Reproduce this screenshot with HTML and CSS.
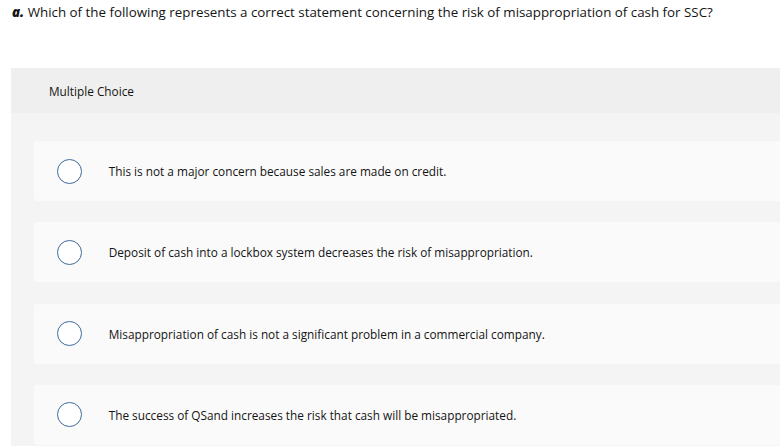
FILE: index.html
```html
<!DOCTYPE html>
<html>
<head>
<meta charset="utf-8">
<link rel="stylesheet" href="styles.css">
</head>
<body>
<div class="question"><span class="label">a.</span> Which of the following represents a correct statement concerning the risk of misappropriation of cash for SSC?</div>
<div class="panel">
  <div class="panel-header">Multiple Choice</div>
  <div class="panel-body">
    <div class="option"><span class="radio"></span><span class="text">This is not a major concern because sales are made on credit.</span></div>
    <div class="option"><span class="radio"></span><span class="text">Deposit of cash into a lockbox system decreases the risk of misappropriation.</span></div>
    <div class="option"><span class="radio"></span><span class="text">Misappropriation of cash is not a significant problem in a commercial company.</span></div>
    <div class="option"><span class="radio"></span><span class="text">The success of QSand increases the risk that cash will be misappropriated.</span></div>
  </div>
</div>
</body>
</html>
```
FILE: styles.css
```css
html, body {
  margin: 0;
  padding: 0;
  background: #ffffff;
  overflow: hidden;
  height: 446px;
}
body {
  font-family: "Open Sans", "Lato", sans-serif;
  color: #141414;
}
.question {
  padding: 3px 0 0 12px;
  font-size: 13.35px;
  line-height: 18px;
  height: 68px;
  box-sizing: border-box;
  white-space: nowrap;
}
.label {
  font-weight: 800;
  font-style: italic;
}
.panel {
  margin-left: 11px;
  width: 800px;
}
.panel-header {
  background: #efefef;
  height: 45px;
  padding-left: 38px;
  display: flex;
  align-items: center;
  font-size: 11.8px;
  box-sizing: border-box;
}
.panel-body {
  background: #f4f4f4;
  padding: 28px 0 20px 23px;
  display: flex;
  flex-direction: column;
  gap: 21.33px;
}
.option {
  background: #fafafa;
  border-radius: 3px;
  height: 60px;
  display: flex;
  align-items: center;
  padding-left: 22.7px;
}
.radio {
  width: 25px;
  height: 25px;
  box-sizing: border-box;
  border: 1.6px solid #3d6b9b;
  border-radius: 50%;
  background: #ffffff;
  flex: none;
}
.text {
  margin-left: 27px;
  font-size: 11.8px;
}
```
